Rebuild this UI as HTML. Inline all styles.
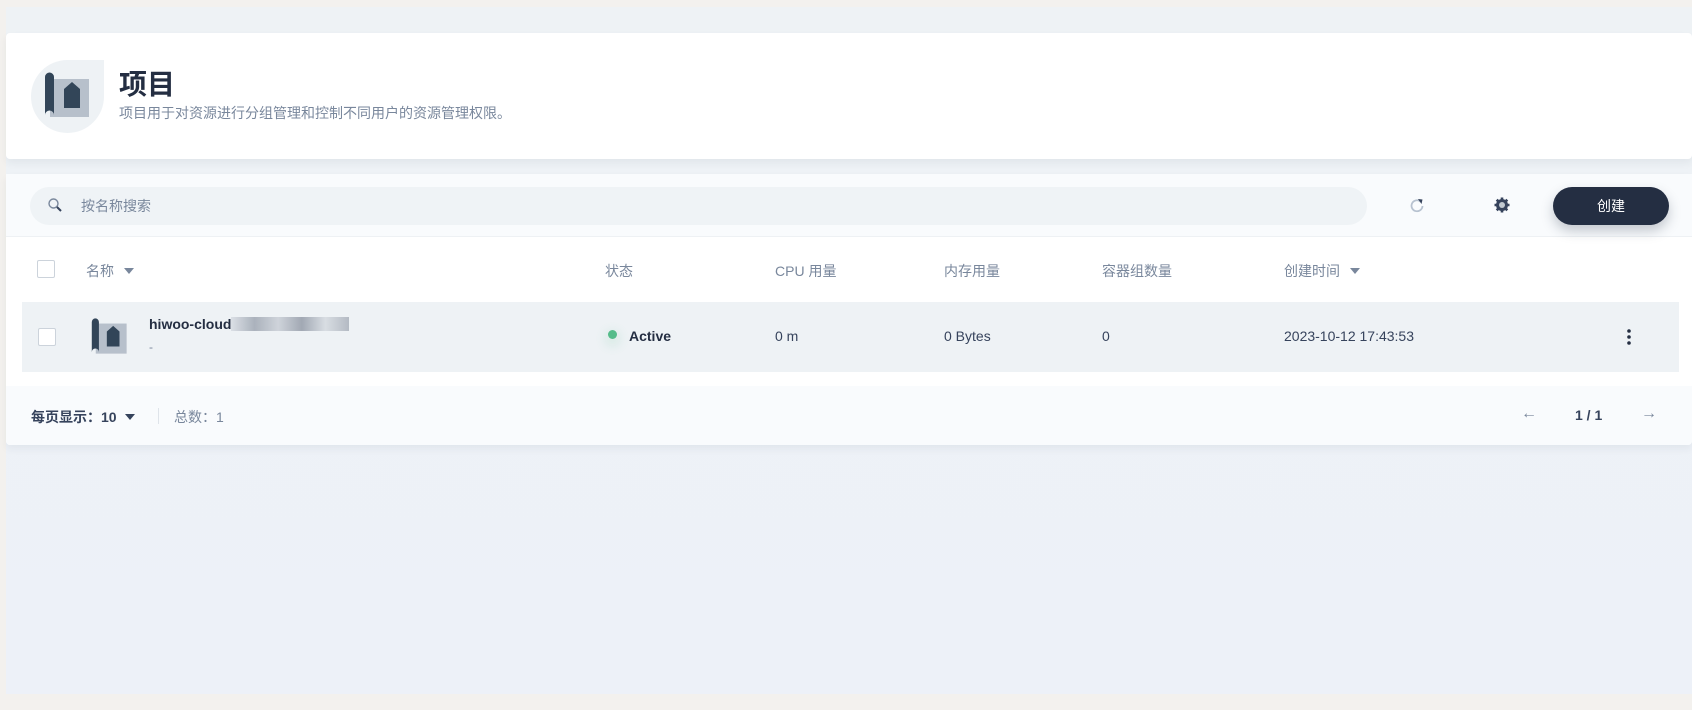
<!DOCTYPE html>
<html><head><meta charset="utf-8"><style>
*{box-sizing:border-box;margin:0;padding:0}
body{width:1692px;height:710px;overflow:hidden;background:#f3f1ee;font-family:"Liberation Sans","Noto Sans CJK SC",sans-serif;color:#242e42;position:relative}
.bg{position:absolute;left:6px;top:7px;width:1686px;height:687px;background:linear-gradient(#eef2f5,#edf1f8)}
.abs{position:absolute}
.card{position:absolute;left:6px;width:1686px;background:#fff;border-radius:4px;box-shadow:0 4px 8px rgba(36,46,66,.06)}
.t{position:absolute;white-space:nowrap}
.h{font-size:14px;color:#79879c;top:261px}
.c{font-size:14px;color:#36435c;top:328px}
.cb{position:absolute;width:18px;height:18px;border:1px solid #ccd3db;border-radius:2px;background:#fff}
</style></head><body>
<div class="bg"></div>
<div class="card" style="top:33px;height:126px"></div>
<div class="abs" style="left:31px;top:60px;width:73px;height:73px;background:#eef2f5;border-radius:50% 0 50% 50%"></div>
<svg class="abs" style="left:44px;top:72px" width="48" height="48" viewBox="0 0 48 48">
<rect x="6" y="7" width="39" height="38" fill="#b7c0cb"/>
<path d="M1 5a4.5 4.5 0 0 1 9 0v38a2 2 0 0 0-9 0z" fill="#324558"/>
<path d="M20 17l8-7 8 7v19h-16z" fill="#324558"/>
</svg>
<div class="t" style="left:119px;top:63px;font-size:28px;font-weight:bold;color:#242e42">项目</div>
<div class="t" style="left:119px;top:103px;font-size:14px;color:#79879c">项目用于对资源进行分组管理和控制不同用户的资源管理权限。</div>

<div class="card" style="top:174px;height:271px;background:#fff"></div>
<div class="abs" style="left:6px;top:174px;width:1686px;height:63px;background:#f9fbfd;border-bottom:1px solid #eef1f4"></div>
<div class="abs" style="left:30px;top:187px;width:1337px;height:38px;background:#eff3f6;border-radius:19px"></div>
<svg class="abs" style="left:47px;top:197px" width="16" height="16" viewBox="0 0 16 16"><circle cx="6.5" cy="6.5" r="4.5" fill="none" stroke="#79879c" stroke-width="1.4"/><path d="M10 10l4 4" stroke="#36435c" stroke-width="2"/></svg>
<div class="t" style="left:81px;top:196px;font-size:14px;color:#79879c">按名称搜索</div>
<svg class="abs" style="left:1409px;top:197px" width="16" height="16" viewBox="0 0 16 16"><path d="M11.5 4.5A5.5 5.5 0 1 0 13.5 9" fill="none" stroke="#b7c2d0" stroke-width="1.8"/><path d="M9 2l4.5 0.5-1 4.5z" fill="#36435c"/></svg>
<svg class="abs" style="left:1493px;top:196px" width="18" height="18" viewBox="0 0 18 18"><circle cx="9" cy="9" r="6" fill="#36435c"/><g stroke="#36435c" stroke-width="2.6"><path d="M9 1.5v15M1.5 9h15M3.7 3.7l10.6 10.6M14.3 3.7L3.7 14.3"/></g><circle cx="9" cy="9" r="3" fill="#c1c9d1"/></svg>
<div class="abs" style="left:1553px;top:187px;width:116px;height:38px;background:#242e42;border-radius:19px;box-shadow:0 6px 12px rgba(36,46,66,.25);color:#fff;font-size:14px;text-align:center;line-height:38px">创建</div>

<div class="cb" style="left:37px;top:260px"></div>
<div class="t h" style="left:86px">名称 <span style="display:inline-block;border:5px solid transparent;border-top:6px solid #79879c;vertical-align:-3px;margin-left:6px"></span></div>
<div class="t h" style="left:605px">状态</div>
<div class="t h" style="left:775px">CPU 用量</div>
<div class="t h" style="left:944px">内存用量</div>
<div class="t h" style="left:1102px">容器组数量</div>
<div class="t h" style="left:1284px">创建时间 <span style="display:inline-block;border:5px solid transparent;border-top:6px solid #79879c;vertical-align:-3px;margin-left:6px"></span></div>

<div class="abs" style="left:22px;top:302px;width:1657px;height:70px;background:#eef2f5"></div>
<div class="cb" style="left:38px;top:328px"></div>
<svg class="abs" style="left:91px;top:318px" width="38" height="38" viewBox="0 0 48 48">
<rect x="6" y="7" width="39" height="38" fill="#b7c0cb"/>
<path d="M1 5a4.5 4.5 0 0 1 9 0v38a2 2 0 0 0-9 0z" fill="#324558"/>
<path d="M20 17l8-7 8 7v19h-16z" fill="#324558"/>
</svg>
<div class="t" style="left:149px;top:316px;font-size:14px;font-weight:bold;color:#242e42">hiwoo-cloud<span style="display:inline-block;width:118px;height:14px;background:linear-gradient(90deg,#d6dbe2,#9aa2ae 20%,#c7ccd4 40%,#8e96a3 60%,#d3d8de 80%,#a5acb7);vertical-align:-2px;opacity:.8"></span></div>
<div class="t" style="left:149px;top:340px;font-size:12px;color:#79879c">-</div>
<div class="abs" style="left:608px;top:330px;width:9px;height:9px;border-radius:50%;background:#55bc8a;box-shadow:0 4px 10px 4px rgba(85,188,138,.12)"></div>
<div class="t" style="left:629px;top:328px;font-size:14px;font-weight:bold;color:#242e42">Active</div>
<div class="t c" style="left:775px">0 m</div>
<div class="t c" style="left:944px">0 Bytes</div>
<div class="t c" style="left:1102px">0</div>
<div class="t c" style="left:1284px">2023-10-12 17:43:53</div>
<svg class="abs" style="left:1625px;top:328px" width="8" height="18" viewBox="0 0 8 18"><g fill="#242e42"><circle cx="4" cy="3" r="1.8"/><circle cx="4" cy="9" r="1.8"/><circle cx="4" cy="15" r="1.8"/></g></svg>

<div class="abs" style="left:6px;top:386px;width:1686px;height:59px;background:#f9fbfd;border-radius:0 0 4px 4px"></div>
<div class="t" style="left:31px;top:407px;font-size:14px;font-weight:bold;color:#36435c">每页显示：10 <span style="display:inline-block;border:5px solid transparent;border-top:6px solid #36435c;vertical-align:-3px;margin-left:5px"></span></div>
<div class="abs" style="left:158px;top:408px;width:1px;height:16px;background:#dfe4ea"></div>
<div class="t" style="left:174px;top:407px;font-size:14px;color:#79879c">总数：1</div>
<div class="t" style="left:1521px;top:405px;font-size:16px;color:#79879c">←</div>
<div class="t" style="left:1575px;top:407px;font-size:14px;font-weight:bold;color:#36435c">1 / 1</div>
<div class="t" style="left:1641px;top:405px;font-size:16px;color:#79879c">→</div>
</body></html>
